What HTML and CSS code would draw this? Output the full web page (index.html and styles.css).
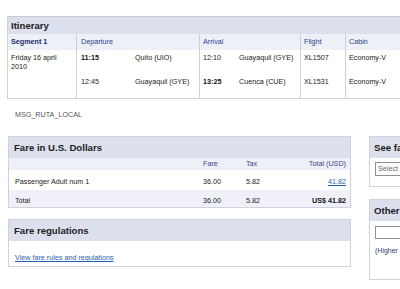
FILE: index.html
```html
<!DOCTYPE html>
<html>
<head>
<meta charset="utf-8">
<link rel="stylesheet" href="styles.css">
</head>
<body>
<div class="page">
  <section class="box itinerary">
    <div class="itin-title">Itinerary</div>
    <div class="itin-grid">
      <div class="ih seg">Segment 1</div>
      <div class="ih dep">Departure</div>
      <div class="ih arr">Arrival</div>
      <div class="ih flt">Flight</div>
      <div class="ih cab last">Cabin</div>

      <div class="ib seg">Friday 16 april<br>2010</div>
      <div class="ib dep">
        <div class="leg"><b class="t dt">11:15</b><span>Quito (UIO)</span></div>
        <div class="leg"><span class="t dt">12:45</span><span>Guayaquil (GYE)</span></div>
      </div>
      <div class="ib arr">
        <div class="leg"><span class="t at">12:10</span><span>Guayaquil (GYE)</span></div>
        <div class="leg"><b class="t at">13:25</b><span>Cuenca (CUE)</span></div>
      </div>
      <div class="ib flt">
        <div class="leg">XL1507</div>
        <div class="leg">XL1531</div>
      </div>
      <div class="ib cab last">
        <div class="leg">Economy-V</div>
        <div class="leg">Economy-V</div>
      </div>
    </div>
  </section>

  <p class="msg">MSG_RUTA_LOCAL</p>

  <div class="lower">
    <div class="main-col">
      <section class="box fare">
        <div class="box-title">Fare in U.S. Dollars</div>
        <div class="fare-row fare-head">
          <span></span><span>Fare</span><span>Tax</span><span class="r">Total (USD)</span>
        </div>
        <div class="fare-row fare-line">
          <span>Passenger Adult num 1</span><span>36.00</span><span>5.82</span><span class="r"><a href="#" class="link">41.82</a></span>
        </div>
        <div class="fare-row fare-total">
          <span>Total</span><span>36.00</span><span>5.82</span><span class="r"><b>US$ 41.82</b></span>
        </div>
      </section>

      <section class="box regs">
        <div class="box-title">Fare regulations</div>
        <div class="regs-body"><a href="#" class="link">View fare rules and regulations</a></div>
      </section>
    </div>

    <aside class="side-col">
      <section class="box side-box see">
        <div class="side-title">See fares in other currencies</div>
        <div class="side-body">
          <div class="select">Select currency</div>
        </div>
      </section>
      <section class="box side-box other">
        <div class="side-title">Other options</div>
        <div class="side-body other-body">
          <div class="input"></div>
          <p class="note">(Higher fares may apply)</p>
        </div>
      </section>
    </aside>
  </div>
</div>
</body>
</html>
```

FILE: styles.css
```css
html, body {
  margin: 0;
  padding: 0;
  background: #ffffff;
  overflow: hidden;
}

body {
  font-family: "Liberation Sans", Arial, Helvetica, sans-serif;
  font-size: 7.2px;
  line-height: 9px;
  color: #222222;
}

.page {
  width: 460px;
  padding: 16px 0 0 7px;
}

.box {
  border: 1px solid #cfd2de;
  background: #ffffff;
}

/* Itinerary */
.itinerary {
  width: 430px;
  border-top-color: #c9ccd6;
}

.itin-title {
  height: 17px;
  line-height: 17px;
  padding-left: 3px;
  background: #dcdfec;
  font-size: 9.6px;
  font-weight: bold;
  color: #222222;
}

.itin-grid {
  display: grid;
  grid-template-columns: 69px 123px 101px 45px 1fr;
  grid-template-rows: 16px 48px;
}

.ih,
.ib {
  border-right: 1px solid #cfcfd4;
  padding-left: 3px;
}

.ih.last,
.ib.last {
  border-right: none;
}

.ih {
  background: #eef0f7;
  line-height: 16px;
  color: #2a3f8c;
}

.ih.seg {
  font-weight: bold;
  color: #1c2c6b;
}

.ih.dep,
.ib.dep {
  padding-left: 4px;
}

.ib.seg {
  padding-top: 3px;
}

.ib {
  display: flex;
  flex-direction: column;
}

.leg {
  height: 24px;
  padding-top: 3px;
  box-sizing: border-box;
  display: flex;
  white-space: nowrap;
}

.t {
  flex: none;
}

.dt {
  width: 54px;
}

.at {
  width: 36px;
}

b {
  font-weight: bold;
  color: #111111;
}

/* message */
.msg {
  margin: 11px 0 0 8px;
  color: #555555;
}

/* lower area */
.lower {
  display: flex;
  align-items: flex-start;
  gap: 18px;
  margin: 17px 0 0 1px;
}

.main-col {
  width: 343px;
  display: flex;
  flex-direction: column;
  gap: 11px;
}

.box-title {
  height: 21px;
  line-height: 21px;
  padding-left: 5px;
  background: #dcdfec;
  font-size: 9.6px;
  font-weight: bold;
  color: #222222;
}

.fare-row {
  display: grid;
  grid-template-columns: 188px 43px 44px 56px;
  padding: 0 4px 0 6px;
  white-space: nowrap;
}

.fare-row .r {
  text-align: right;
}

.fare-head {
  height: 12px;
  line-height: 12px;
  background: #eef0f7;
  color: #3a4487;
  border-bottom: 1px solid #ffffff;
}

.fare-line {
  height: 19px;
  padding-top: 6px;
  box-sizing: border-box;
  background: #ffffff;
}

.fare-total {
  height: 17px;
  padding-top: 6px;
  box-sizing: border-box;
  background: #f0f1f8;
}

.link {
  color: #1f5fb0;
  text-decoration: underline;
}

.regs-body {
  padding: 12px 6px 4px;
}

/* side column */
.side-col {
  display: flex;
  flex-direction: column;
  gap: 12px;
}

.side-box {
  width: 200px;
  white-space: nowrap;
}

.side-title {
  height: 21px;
  line-height: 21px;
  padding-left: 4px;
  background: #dcdfec;
  font-size: 9.6px;
  font-weight: bold;
  color: #222222;
}

.side-body {
  padding: 4px 5px 10px;
}

.select {
  width: 120px;
  height: 14px;
  box-sizing: border-box;
  border: 1px solid #8d8f96;
  padding-left: 2px;
  line-height: 12px;
  color: #666666;
}

.other-body {
  padding: 5px 5px 24px;
}

.input {
  width: 120px;
  height: 13px;
  box-sizing: border-box;
  border: 1px solid #8d8f96;
}

.note {
  margin: 7px 0 0 0;
  color: #333a66;
  font-size: 7px;
}
```
